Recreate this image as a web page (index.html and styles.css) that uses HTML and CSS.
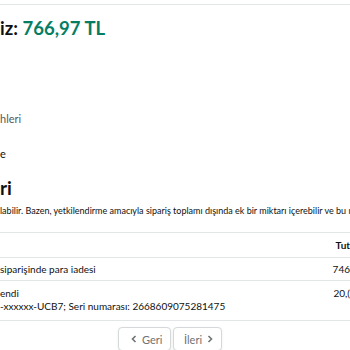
FILE: index.html
```html
<!DOCTYPE html>
<html lang="tr">
<head>
<meta charset="utf-8">
<link rel="stylesheet" href="styles.css">
</head>
<body>
<div class="page">
  <div class="total">iz: <span class="amount">766,97 TL</span></div>
  <div class="sub muted">hleri</div>
  <div class="sub">e</div>
  <h2 class="heading">ri</h2>
  <p class="note">labilir. Bazen, yetkilendirme amacıyla sipariş toplamı dışında ek bir miktarı içerebilir ve bu m</p>
  <div class="table">
    <div class="row head">
      <div class="desc"></div>
      <div class="amt">Tut</div>
    </div>
    <div class="row">
      <div class="desc">siparişinde para iadesi</div>
      <div class="amt">746</div>
    </div>
    <div class="row tall">
      <div class="desc">endi<br>-xxxxxx-UCB7; Seri numarası: 2668609075281475</div>
      <div class="amt">20,(</div>
    </div>
  </div>
  <div class="pager">
    <button class="btn prev"><svg class="chev" width="6" height="8" viewBox="0 0 6 8"><path d="M4.5 1 L1.5 4 L4.5 7" fill="none" stroke="currentColor" stroke-width="1.6"/></svg>Geri</button>
    <button class="btn next">İleri<svg class="chev" width="6" height="8" viewBox="0 0 6 8"><path d="M1.5 1 L4.5 4 L1.5 7" fill="none" stroke="currentColor" stroke-width="1.6"/></svg></button>
  </div>
</div>
</body>
</html>
```

FILE: styles.css
```css
html, body {
  margin: 0;
  padding: 0;
  background: #fff;
  overflow: hidden;
  width: 350px;
  height: 350px;
}
body {
  font-family: "Lato", "Liberation Sans", sans-serif;
  color: #0f1111;
  padding-top: 4px;
}
.page {
  border-top: 1px solid #e3e6e6;
  width: 350px;
}
.total {
  font-size: 18.5px;
  font-weight: 700;
  margin-top: 12px;
  line-height: 22px;
}
.amount { color: #067d62; }
.sub {
  font-size: 11px;
  line-height: 14px;
  white-space: nowrap;
}
.muted { color: #565959; margin-top: 73px; }
.sub + .sub { margin-top: 21px; }
.heading {
  font-size: 19px;
  font-weight: 700;
  margin: 16px 0 0;
  line-height: 22px;
}
.note {
  font-size: 9px;
  line-height: 12px;
  margin: 6px 0 0;
  white-space: nowrap;
  overflow: hidden;
}
.table {
  margin-top: 15px;
  width: 350px;
  font-size: 10px;
  line-height: 13px;
}
.row {
  display: flex;
  border-top: 1px solid #e3e6e6;
  padding: 5px 0 4px;
}
.row.tall { padding: 6px 0 7px; }
.row:last-child { border-bottom: 1px solid #e3e6e6; }
.row.head { padding: 6px 0 5px; font-weight: 700; }
.desc { width: 337px; white-space: nowrap; }
.amt { white-space: nowrap; }
.pager {
  display: flex;
  gap: 2px;
  margin-top: 6px;
  padding-left: 118px;
}
.btn {
  font-family: inherit;
  font-size: 11px;
  color: #6f7373;
  background: #fff;
  border: 1px solid #d5d9d9;
  border-radius: 4px;
  height: 24px;
  display: flex;
  align-items: center;
  gap: 5px;
  box-shadow: 0 1px 2px rgba(213,217,217,0.5);
}
.btn.prev { width: 53px; padding: 0 0 0 12px; }
.btn.next { width: 49px; padding: 0 0 0 10px; }
.chev { display: block; }
```
